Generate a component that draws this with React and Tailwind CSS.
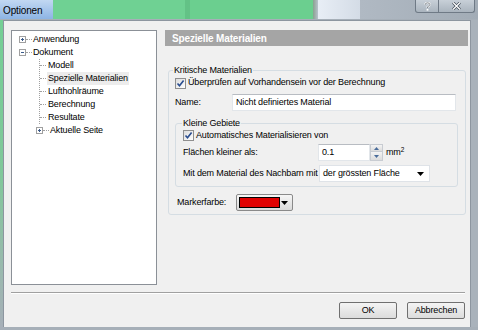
import React from "react";

const Check = () => (
    <span className="w-[11px] h-[11px] border border-[#8f8f8f] bg-gradient-to-br from-[#dcdcdc] to-white flex items-center justify-center shrink-0">
        <svg width="9" height="9" viewBox="0 0 9 9">
            <path d="M1.5 4.5 L3.5 6.8 L7.6 1.5" fill="none" stroke="#2a4d8f" strokeWidth="1.6" />
        </svg>
    </span>
);

const TreeBox = ({ open }) => (
    <span className="w-[7px] h-[7px] border border-[#a0a0a0] bg-white flex items-center justify-center relative shrink-0">
        <span className="absolute w-[3px] h-[1px] bg-[#3a5a8a]" />
        {!open && <span className="absolute w-[1px] h-[3px] bg-[#3a5a8a]" />}
    </span>
);

const Stub = () => <span className="w-[6px] border-t border-dotted border-[#a0a0a0] shrink-0" />;

const Triangle = () => (
    <svg width="7" height="4" viewBox="0 0 7 4"><path d="M0 0 L7 0 L3.5 4 Z" fill="#000" /></svg>
);

const App = () => {
    const children = ["Modell", "Spezielle Materialien", "Lufthohlräume", "Berechnung", "Resultate"];

    return (
        <div className="w-[478px] h-[330px] overflow-hidden flex flex-col bg-[#a6afb8] text-[9px] tracking-[-0.15px] text-black whitespace-nowrap" style={{ fontFamily: '"Liberation Sans", Arial, sans-serif' }}>
            {/* title bar */}
            <div className="h-[20px] flex shrink-0">
                <div className="w-[53px] bg-gradient-to-b from-[#c2d8f2] to-[#8db4e4] pl-[3px] pt-[3px] text-[10px] h-[19px]">Optionen</div>
                <div className="w-[132px] bg-[#6fd193] h-[19px]" />
                <div className="w-[5px] bg-[#63c286] h-[19px]" />
                <div className="w-[123px] bg-[#6bcf8f] h-[19px]" />
                <div className="w-[5px] bg-gradient-to-r from-[#8aa090] to-[#b8c2cc] h-[19px]" />
                <div className="w-[42px] bg-gradient-to-r from-[#e8eef6] to-[#d4dce6] h-[19px]" />
                <div className="flex-1 bg-gradient-to-r from-[#b0b9c3] to-[#a2acb6] h-[19px] flex justify-end pr-[3px]">
                    <div className="w-[24px] h-[13px] border border-t-0 border-[#6f7a86] rounded-bl-[3px] bg-gradient-to-b from-[#c8d0d8] to-[#aab4be] flex items-center justify-center">
                        <svg width="7" height="9" viewBox="0 0 7 9">
                            <path d="M1.2 2.8 Q1.2 0.8 3.5 0.8 Q5.8 0.8 5.8 2.6 Q5.8 3.8 3.5 4.8 L3.5 6" fill="none" stroke="#fff" strokeWidth="1.8" />
                            <rect x="2.6" y="6.8" width="1.8" height="1.8" fill="#fff" />
                            <path d="M1.2 2.8 Q1.2 0.8 3.5 0.8 Q5.8 0.8 5.8 2.6 Q5.8 3.8 3.5 4.8 L3.5 6" fill="none" stroke="#39434e" strokeWidth="0.6" />
                        </svg>
                    </div>
                    <div className="w-[36px] h-[13px] border border-t-0 border-l-0 border-[#6f7a86] rounded-br-[3px] bg-gradient-to-b from-[#c8d0d8] to-[#aab4be] flex items-center justify-center">
                        <svg width="9" height="8" viewBox="0 0 9 8">
                            <path d="M1 0.5 L8 7.5 M8 0.5 L1 7.5" stroke="#39434e" strokeWidth="2.6" />
                            <path d="M1 0.5 L8 7.5 M8 0.5 L1 7.5" stroke="#fff" strokeWidth="1.4" />
                        </svg>
                    </div>
                </div>
            </div>

            <div className="flex h-[307px]">
                <div className="w-[3px] bg-gradient-to-b from-[#74cf95] via-[#80c89a] to-[#a6afb8]" />
                <div className="w-[467px] bg-[#f0f0f0] border-l border-t border-[#8d96a0] pt-[9px] pl-[7px]">
                    <div className="flex gap-[8px]">
                        {/* tree */}
                        <div className="w-[146px] h-[255px] bg-white border border-[#8b9097] pt-[2px] pl-[7px]">
                            <div className="h-[13px] flex items-center">
                                <TreeBox />
                                <Stub />
                                <span className="ml-[1px]">Anwendung</span>
                            </div>
                            <div className="h-[13px] flex items-center">
                                <TreeBox open />
                                <Stub />
                                <span className="ml-[1px]">Dokument</span>
                            </div>
                            <div className="ml-[20px] border-l border-dotted border-[#a0a0a0]">
                                {children.map((c) => (
                                    <div key={c} className="h-[13px] flex items-center">
                                        <Stub />
                                        <span className={`ml-[1px] px-[1px] ${c === "Spezielle Materialien" ? "bg-[#ececec]" : ""}`}>{c}</span>
                                    </div>
                                ))}
                            </div>
                            <div className="h-[13px] flex items-center ml-[17px]">
                                <TreeBox />
                                <Stub />
                                <span className="ml-[1px]">Aktuelle Seite</span>
                            </div>
                        </div>

                        {/* right panel */}
                        <div className="w-[303px]">
                            <div className="h-[16px] bg-[#a5a5a5] pl-[7px] flex items-center text-white font-bold text-[10px]">Spezielle Materialien</div>

                            <fieldset className="mt-[18px] ml-[3px] w-[298px] border border-[#d5dde3] rounded-[3px] pl-[6px] pb-[3px]">
                                <legend className="px-[1px] leading-[12px] -ml-[2px]">Kritische Materialien</legend>
                                <div className="h-[14px] flex items-center gap-[2px]">
                                    <Check />
                                    <span>Überprüfen auf Vorhandensein vor der Berechnung</span>
                                </div>
                                <div className="mt-[4px] h-[17px] flex items-center">
                                    <span className="w-[57px]">Name:</span>
                                    <div className="w-[224px] h-[17px] bg-white border border-[#e2e6ea] border-t-[#b8bcc2] flex items-center pl-[3px]">Nicht definiertes Material</div>
                                </div>

                                <fieldset className="mt-[6px] w-[283px] h-[70px] border border-[#d5dde3] rounded-[3px] pl-[7px]">
                                    <legend className="px-[1px] leading-[12px] -ml-[1px]">Kleine Gebiete</legend>
                                    <div className="h-[13px] flex items-center gap-[2px]">
                                        <Check />
                                        <span>Automatisches Materialisieren von</span>
                                    </div>
                                    <div className="mt-[2px] h-[17px] flex items-center">
                                        <span className="w-[135px]">Flächen kleiner als:</span>
                                        <div className="w-[52px] h-[17px] bg-white border border-[#e2e6ea] border-t-[#b8bcc2] flex items-center pl-[3px]">0.1</div>
                                        <div className="w-[13px] h-[17px] flex flex-col">
                                            <div className="h-[8px] border border-[#c8ccd2] bg-gradient-to-b from-[#f4f4f4] to-[#dcdcdc] flex items-center justify-center">
                                                <svg width="5" height="3" viewBox="0 0 5 3"><path d="M0 3 L5 3 L2.5 0 Z" fill="#4a6c9a" /></svg>
                                            </div>
                                            <div className="h-[9px] border border-t-0 border-[#c8ccd2] bg-gradient-to-b from-[#f4f4f4] to-[#dcdcdc] flex items-center justify-center">
                                                <svg width="5" height="3" viewBox="0 0 5 3"><path d="M0 0 L5 0 L2.5 3 Z" fill="#4a6c9a" /></svg>
                                            </div>
                                        </div>
                                        <span className="ml-[3px]">mm<span className="text-[6.5px] align-[3px]">2</span></span>
                                    </div>
                                    <div className="mt-[4px] h-[17px] flex items-center">
                                        <span className="w-[136px]">Mit dem Material des Nachbarn mit</span>
                                        <div className="w-[111px] h-[17px] bg-white border border-[#dfe3e8] flex items-center justify-between pl-[3px] pr-[5px]">
                                            <span>der grössten Fläche</span>
                                            <Triangle />
                                        </div>
                                    </div>
                                </fieldset>

                                <div className="mt-[7px] h-[17px] flex items-center pl-[2px]">
                                    <span className="w-[59px]">Markerfarbe:</span>
                                    <div className="w-[57px] h-[17px] border border-[#8a8a8a] rounded-[2px] bg-gradient-to-b from-[#f6f6f6] to-[#dadada] flex items-center pl-[2px] pr-[4px] justify-between">
                                        <span className="w-[41px] h-[11px] bg-[#e00000] border border-black" />
                                        <Triangle />
                                    </div>
                                </div>
                            </fieldset>
                        </div>
                    </div>

                    <div className="mt-[7px] w-[454px] h-[2px] border-t border-[#a0a0a0] border-b border-b-white" />

                    <div className="mt-[8px] w-[454px] flex justify-end gap-[10px]">
                        <button className="w-[58px] h-[17px] border border-[#707070] rounded-[2px] bg-gradient-to-b from-[#f4f4f4] to-[#dcdcdc] text-[9px]">OK</button>
                        <button className="w-[58px] h-[17px] border border-[#707070] rounded-[2px] bg-gradient-to-b from-[#f4f4f4] to-[#dcdcdc] text-[9px]">Abbrechen</button>
                    </div>
                </div>
                <div className="w-[8px] border-l border-[#8d96a0] bg-[#a9b2bb]" />
            </div>
            <div className="h-[3px] bg-[#a6afb8]" />
        </div>
    );
};

export default App;
